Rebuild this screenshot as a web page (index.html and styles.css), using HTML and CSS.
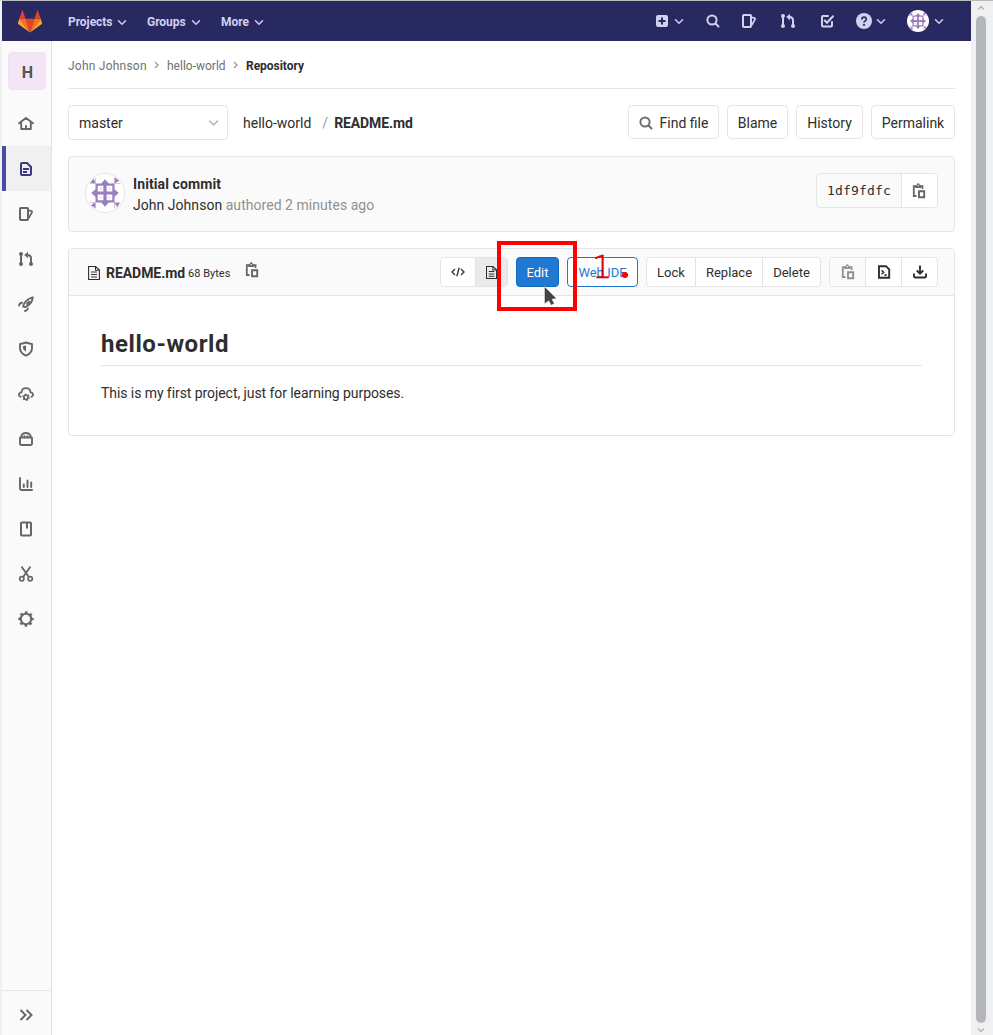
FILE: index.html
```html
<!DOCTYPE html>
<html lang="en">
<head>
<meta charset="utf-8">
<title>README.md · hello-world</title>
<link rel="stylesheet" href="styles.css">
</head>
<body>
<svg class="defs" aria-hidden="true">
  <symbol id="chevron" viewBox="0 0 10 10"><path d="M1.500 3.800 5 7.200l3.500-3.400" fill="none" stroke="currentColor" stroke-width="1.500" stroke-linecap="round"/></symbol>
  <symbol id="search" viewBox="0 0 16 16"><g fill="none" stroke="currentColor" stroke-width="2" stroke-linecap="round"><circle cx="7" cy="7" r="4.600"/><path d="m10.500 10.500 3 3"/></g></symbol>
  <symbol id="issues" viewBox="0 0 16 16"><path d="M2.800 2h6.400q.8 0 .8.800v10.400q0 .8-.8.800H2.800q-.8 0-.8-.8V2.800q0-.8.800-.8z" fill="none" stroke="currentColor" stroke-width="2"/><path d="M10.500 4.300l3 .8q.8.300.6 1.100L10.800 12" fill="none" stroke="currentColor" stroke-width="1.700" stroke-linejoin="round"/></symbol>
  <symbol id="merge" viewBox="0 0 16 16"><g fill="none" stroke="currentColor" stroke-width="2"><path d="M3 3v10M13 13V7.500Q13 4 9.500 4H8.500"/></g><g fill="currentColor"><circle cx="3" cy="3" r="2"/><circle cx="3" cy="13" r="2"/><circle cx="13" cy="13" r="2"/><path d="M10 .8v6.400L6.200 4z"/></g></symbol>
  <symbol id="clip" viewBox="0 0 16 16"><path d="M5.500 13H2.800V3.200h8.700V6" fill="none" stroke="currentColor" stroke-width="1.800"/><path d="M8 8.300h5.200v5.900H8z" fill="none" stroke="currentColor" stroke-width="1.900"/><path d="M4.300 5V2.300H5.600Q5.700.300 7.200.300t1.600 2h1.300V5z" fill="currentColor"/><path d="M6.500 2h1.300v1.200H6.500z" fill="#fafafa"/></symbol>
  <symbol id="doc" viewBox="0 0 14 16"><path d="M1.600 1.500h7l3.800 3.600v9.400H1.600zM8.500 1.500v3.800h4M4 7h6M4 9.500h6M4 12h6" fill="none" stroke="currentColor" stroke-width="1.100"/></symbol>
  <symbol id="identicon" viewBox="0 0 40 40"><circle cx="20" cy="20" r="20" fill="#fff"/><g fill="#9a7fc0"><path d="M20 5.500 24 10h6v6l4.500 4-4.500 4v6h-6l-4 4.500-4-4.500h-6v-6l-4.500-4 4.500-4v-6h6z"/><path d="M4.500 9.500 8 4.500l2 5zM30 3.500l5 3.500-5 3zM5 33l5-3.500V36zM30 30.500h5.500l-2.500 4.500z"/></g><g fill="#c4b3dc"><path d="M9.500 4h.8v7h-.8zM29.700 4h.8v7h-.8zM9.500 29h.8v7h-.8zM29.700 29h.8v7h-.8zM4 9.500h7v.8H4zM29 9.500h7v.8h-7zM4 29.700h7v.8H4zM29 29.700h7v.8h-7z"/></g><g fill="#fff"><path d="M12.300 12.300H18.300V18.300h-6zM21.700 12.300h6v6h-6zM12.300 21.700h6v6h-6zM21.700 21.700h6v6h-6z"/></g><g fill="#9a7fc0"><path d="M14.300 14.300h2.500v2.500h-2.500zM23.300 14.300h2.500v2.500h-2.500zM14.300 23.300h2.500v2.500h-2.500zM23.300 23.300h2.500v2.500h-2.500z" opacity=".2"/></g></symbol>
</svg>

<div class="window">
  <div class="viewport">
    <header class="navbar">
      <svg class="logo" viewBox="0 0 24 23"><path fill="#e24329" d="M12 22.500 16.500 8.800H7.500z"/><path fill="#fc6d26" d="M12 22.500 7.500 8.800H1.200zM12 22.500l4.500-13.700h6.300z"/><path fill="#fca326" d="M1.200 8.800 0 13q-.1.700.5 1.200L12 22.500zM22.800 8.800 24 13q.1.700-.5 1.200L12 22.500z"/><path fill="#e24329" d="M1.200 8.800h6.300L4.800.500q-.3-.5-.6 0zM22.800 8.800h-6.300L19.200.500q.3-.5.600 0z"/></svg>
      <nav class="menu">
        <a class="menu-item projects">Projects<svg><use href="#chevron"/></svg></a>
        <a class="menu-item groups">Groups<svg><use href="#chevron"/></svg></a>
        <a class="menu-item more">More<svg><use href="#chevron"/></svg></a>
      </nav>
      <div class="tools">
        <span class="pair"><svg viewBox="0 0 16 16"><path fill="currentColor" fill-rule="evenodd" d="M4 2h8q2 0 2 2v8q0 2-2 2H4q-2 0-2-2V4q0-2 2-2zm3 2.500V7H4.500v2H7v2.500h2V9h2.500V7H9V4.500z"/></svg><svg class="chev"><use href="#chevron"/></svg></span>
        <svg class="t-search"><use href="#search"/></svg>
        <svg class="t-issues"><use href="#issues"/></svg>
        <svg class="t-merge"><use href="#merge"/></svg>
        <svg class="t-todo" viewBox="0 0 16 16"><path d="M9 3H4q-1 0-1 1v8.500q0 1 1 1h8q1 0 1-1V9M5.800 7.500 8 9.700l6-6.500" fill="none" stroke="currentColor" stroke-width="2" stroke-linecap="round"/></svg>
        <span class="pair help"><svg viewBox="0 0 16 16"><circle cx="8" cy="8" r="8" fill="currentColor"/><path d="M5.900 6.400q0-2.200 2.200-2.200t2.200 1.900q0 1.200-1.200 1.800Q8 8.400 8 9.500" fill="none" stroke="#292961" stroke-width="1.700"/><circle cx="8" cy="11.800" r="1.100" fill="#292961"/></svg><svg class="chev"><use href="#chevron"/></svg></span>
        <span class="pair user"><svg class="user-avatar"><use href="#identicon"/></svg><svg class="chev"><use href="#chevron"/></svg></span>
      </div>
    </header>

    <div class="body">
      <aside class="sidebar">
        <div class="project-avatar">H</div>
        <a class="side-item home"><svg viewBox="0 0 16 16"><path d="M1 8.300 8 3l7 5.300M3.200 7v7h9.600V7M8 14v-3" fill="none" stroke="currentColor" stroke-width="1.900" stroke-linecap="round" stroke-linejoin="round"/></svg></a>
        <a class="side-item active"><svg viewBox="0 0 16 16"><path d="M4 2h5l4 4v7q0 1-1 1H4q-1 0-1-1V3q0-1 1-1z" fill="none" stroke="currentColor" stroke-width="2"/><path d="M5 8h6M5 11h4" stroke="currentColor" stroke-width="1.800"/></svg></a>
        <a class="side-item"><svg><use href="#issues"/></svg></a>
        <a class="side-item"><svg><use href="#merge"/></svg></a>
        <a class="side-item"><svg viewBox="0 0 16 16"><path d="M5.500 9Q8 3 14.800 1.300 14.200 7.500 7.300 11.200L5.200 10.500zM9 7.800l2-2.200M1 9.500q.6-2.600 3-2.800M7 15q2.400-.5 2.900-2.600" fill="none" stroke="currentColor" stroke-width="1.900" stroke-linecap="round" stroke-linejoin="round"/></svg></a>
        <a class="side-item"><svg viewBox="0 0 16 16"><path d="M8 1.500q3.500 1.400 6 1.400v4q0 5-6 7.700-6-2.700-6-7.700v-4q2.500 0 6-1.400z" fill="none" stroke="currentColor" stroke-width="1.900" stroke-linejoin="round"/><path d="M8 4.500v6.200Q5 9 5 7V5.200z" fill="currentColor"/></svg></a>
        <a class="side-item"><svg viewBox="0 0 16 16"><path d="M2.500 10.800Q.3 9.500 1.200 7.700 1.900 6.200 3.400 6.300 4 2.200 8 2.200t4.600 4.100q1.500-.1 2.200 1.400.9 1.800-1.300 3.100" fill="none" stroke="currentColor" stroke-width="1.800" stroke-linecap="round"/><circle cx="8" cy="11.300" r="2.100" fill="none" stroke="currentColor" stroke-width="1.700"/><circle cx="8" cy="11.300" r="3.200" fill="none" stroke="currentColor" stroke-width="1.200" stroke-dasharray="1.500 1.851"/></svg></a>
        <a class="side-item"><svg viewBox="0 0 16 16"><path d="M2.500 6.500h11q.5 0 .5.500v5.800q0 1.200-1.200 1.200H3.200Q2 14 2 12.800V7q0-.5.500-.5zM3 6Q4 2 8 2t5 4M6.500 6V4.500M9.500 6V4.500" fill="none" stroke="currentColor" stroke-width="1.900"/></svg></a>
        <a class="side-item"><svg viewBox="0 0 16 16"><path d="M2 2v10.500q0 1.500 1.500 1.500H14M5.800 8.500v2.500M9.500 4.500V11M13.200 6.500V11" fill="none" stroke="currentColor" stroke-width="1.900" stroke-linecap="round"/></svg></a>
        <a class="side-item"><svg viewBox="0 0 16 16"><path d="M3.800 1.500h8.400q.8 0 .8.800v11.400q0 .8-.8.800H3.800q-.8 0-.8-.8V2.300q0-.8.800-.8zM9 1.500v6" fill="none" stroke="currentColor" stroke-width="2"/></svg></a>
        <a class="side-item"><svg viewBox="0 0 16 16"><path d="M4 1.200 10.500 10.500M12 1.200 5.500 10.500" fill="none" stroke="currentColor" stroke-width="1.900" stroke-linecap="round"/><circle cx="3.800" cy="12.700" r="2.100" fill="none" stroke="currentColor" stroke-width="1.700"/><circle cx="12.200" cy="12.700" r="2.100" fill="none" stroke="currentColor" stroke-width="1.700"/></svg></a>
        <a class="side-item"><svg viewBox="0 0 16 16"><circle cx="8" cy="8" r="5.200" fill="none" stroke="currentColor" stroke-width="2"/><circle cx="8" cy="8" r="6.700" fill="none" stroke="currentColor" stroke-width="2" stroke-dasharray="2.600 2.662" stroke-dashoffset="1.300"/></svg></a>
        <a class="collapse"><svg viewBox="0 0 16 16"><path d="m2.500 3 5 5-5 5M8.500 3l5 5-5 5" fill="none" stroke="currentColor" stroke-width="2"/></svg></a>
      </aside>

      <main class="content">
        <nav class="crumbs"><span class="c-user">John Johnson</span><svg viewBox="0 0 8 8"><path d="m2 1 3 3-3 3" fill="none" stroke="currentColor" stroke-width="1.300"/></svg><span class="c-project">hello-world</span><svg viewBox="0 0 8 8"><path d="m2 1 3 3-3 3" fill="none" stroke="currentColor" stroke-width="1.300"/></svg><strong>Repository</strong></nav>

        <div class="tree">
          <div class="branch">master<svg><use href="#chevron"/></svg></div>
          <div class="path"><span>hello-world</span><i>/</i><strong>README.md</strong></div>
          <div class="actions">
            <a class="btn find"><svg><use href="#search"/></svg>Find file</a>
            <a class="btn blame">Blame</a>
            <a class="btn history">History</a>
            <a class="btn permalink">Permalink</a>
          </div>
        </div>

        <section class="commit">
          <svg class="avatar"><use href="#identicon"/></svg>
          <div class="commit-text"><strong>Initial commit</strong><p><span>John Johnson</span> authored 2 minutes ago</p></div>
          <div class="hash"><code>1df9fdfc</code><a><svg><use href="#clip"/></svg></a></div>
        </section>

        <section class="file">
          <div class="file-head">
            <svg class="file-icon"><use href="#doc"/></svg>
            <strong class="file-name">README.md</strong>
            <small>68 Bytes</small>
            <svg class="copy-path"><use href="#clip"/></svg>
            <div class="file-actions">
              <div class="group viewer"><a><svg viewBox="0 0 16 16"><path d="M5 5 2 8l3 3M11 5l3 3-3 3M9.200 3.800l-2.400 8.400" fill="none" stroke="currentColor" stroke-width="1.300"/></svg></a><a class="on"><svg class="doc"><use href="#doc"/></svg></a></div>
              <div class="edit-wrap"><a class="edit">Edit</a>
                <span class="highlight"></span>
                <svg class="cursor" viewBox="0 0 14 20"><path d="M.5.500 12.500 12.500 8 13.300l2.300 4.200-3.200 1.700-2.300-4.400L.5 17.800z" fill="#444" stroke="#eee" stroke-width=".5"/></svg>
              </div>
              <div class="ide-wrap"><a class="ide">Web IDE</a><span class="step">1</span><span class="step-dot"></span></div>
              <div class="group manage"><a>Lock</a><a>Replace</a><a>Delete</a></div>
              <div class="group raw"><a class="disabled"><svg><use href="#clip"/></svg></a><a><svg viewBox="0 0 16 16"><path d="M3 2.200h7l3.200 3.200v8.400H3z" fill="none" stroke="currentColor" stroke-width="1.900"/><path d="m5.500 6.200 2.300 2-2.300 2M8.300 11h2.500" fill="none" stroke="currentColor" stroke-width="1.400"/></svg></a><a><svg viewBox="0 0 16 16"><path d="M8 1.500V9M4.800 6.500 8 9.700l3.200-3.200M2 9.500v2.700q0 1.300 1.300 1.300h9.400q1.300 0 1.300-1.300V9.500" fill="none" stroke="currentColor" stroke-width="1.900"/></svg></a></div>
            </div>
          </div>
          <article class="readme"><h1>hello-world</h1><p>This is my first project, just for learning purposes.</p></article>
        </section>
      </main>
    </div>
  </div>
  <div class="scrollbar"><svg viewBox="0 0 8 6"><path d="M1 4.500 4 1.500l3 3" fill="none" stroke="currentColor" stroke-width="1.500"/></svg><div class="thumb"></div><svg viewBox="0 0 8 6"><path d="m1 1.500 3 3 3-3" fill="none" stroke="currentColor" stroke-width="1.500"/></svg></div>
</div>
</body>
</html>
```
FILE: styles.css
```css
* { box-sizing: border-box; }
body { margin: 0; background: #fff; color: #2e2e2e; font: 14px/20px Roboto, "Noto Sans", sans-serif; white-space: nowrap; }
p, h1 { margin: 0; }
svg { display: block; flex: none; width: 16px; height: 16px; }
.defs { position: absolute; width: 0; height: 0; }
strong { font-weight: 700; }

.window { display: flex; height: 1035px; border-top: 1px solid #b9babb; border-left: 2px solid #f0f0f0; overflow: hidden; }
.viewport { width: 969px; display: flex; flex-direction: column; }

.navbar { height: 40px; flex: none; display: flex; align-items: center; padding: 0 27px 0 16px; background: #292961; color: #d1d1f0; }
.logo { width: 24px; height: 23px; margin-right: 26px; }
.menu { display: flex; padding-top: 1px; }
.menu-item { display: flex; align-items: center; justify-content: space-between; font-size: 12px; font-weight: 700; letter-spacing: -.05px; }
.menu-item svg, .chev { width: 10px; height: 10px; }
.projects { width: 59px; margin-right: 20px; }
.groups { width: 54px; margin-right: 20px; }
.more { width: 43px; }
.tools { display: flex; align-items: center; margin-left: auto; }
.pair { display: flex; align-items: center; gap: 4px; }
.t-search { margin-left: 21px; }
.t-issues { margin-left: 20px; }
.t-merge, .t-todo { margin-left: 23px; }
.help { margin-left: 21px; }
.user { margin-left: 21px; gap: 5px; }
.user-avatar { width: 22px; height: 22px; }

.body { flex: 1; display: flex; }
.sidebar { width: 50px; display: flex; flex-direction: column; background: #fafafa; border-right: 1px solid #e5e5e5; color: #666; }
.project-avatar { width: 38px; height: 38px; margin: 11px 0 11px 6px; padding-left: 1px; border: 1px solid #eee2f2; border-radius: 4px; background: #f3e5f5; color: #555; font-size: 16px; font-weight: 700; line-height: 39px; text-align: center; }
.side-item { height: 45px; display: flex; align-items: center; padding-left: 16px; }
.side-item.home { padding-bottom: 1px; }
.side-item.active { padding-left: 12px; border-left: 4px solid #4b4ba3; background: #f0f0f0; color: #393982; }
.collapse { height: 45px; margin-top: auto; padding: 16px 0 0 16px; border-top: 1px solid #e5e5e5; }

.content { flex: 1; padding: 0 16px; }
.crumbs { height: 48px; display: flex; align-items: center; padding-top: 2px; border-bottom: 1px solid #e5e5e5; color: #707070; font-size: 12px; }
.crumbs svg { width: 8px; height: 8px; margin: 0 6px 2px; color: #999; }
.crumbs strong { color: #2e2e2e; letter-spacing: -.03px; }
.c-user { width: 79px; letter-spacing: .23px; }
.c-project { width: 59px; }

.tree { display: flex; align-items: center; height: 35px; margin-top: 16px; }
.branch { width: 160px; height: 35px; display: flex; align-items: center; justify-content: space-between; padding: 0 8px 0 10px; border: 1px solid #e5e5e5; border-radius: 4px; }
.branch svg { width: 11px; height: 11px; color: #bababa; }
.path { display: flex; margin-left: 15px; }
.path i { margin: 0 6px 0 11px; color: #999; font-style: normal; }
.path strong, .file-name { letter-spacing: -.1px; }
.actions { display: flex; gap: 8px; margin-left: auto; }
.btn { height: 34px; display: flex; align-items: center; justify-content: center; margin-bottom: 1px; padding-top: 2px; border: 1px solid #e5e5e5; border-radius: 4px; background: #fff; }
.find { width: 91px; gap: 6px; padding-right: 1px; }
.find svg { color: #707070; }
.blame { width: 61px; }
.history { width: 67px; }
.permalink { width: 84px; }

.commit { height: 76px; display: flex; margin-top: 16px; padding: 16px; border: 1px solid #e5e5e5; border-radius: 4px; background: #fafafa; }
.avatar { width: 40px; height: 40px; border: 1px solid #e5e5e5; border-radius: 50%; }
.commit-text { margin: 1px 0 0 8px; line-height: 21px; color: #919191; letter-spacing: .04px; }
.commit-text strong { letter-spacing: .1px; }
.commit-text strong, .commit-text span { color: #2e2e2e; }
.hash { display: flex; width: 122px; height: 35px; margin-left: auto; border: 1px solid #e5e5e5; border-radius: 4px; overflow: hidden; }
.hash code { width: 84px; font: 13px/34px "DejaVu Sans Mono", monospace; letter-spacing: .17px; text-align: center; }
.hash a { flex: 1; display: grid; place-items: center; padding-right: 1px; border-left: 1px solid #e5e5e5; background: #fff; color: #666; }

.file { height: 188px; margin-top: 16px; border: 1px solid #e5e5e5; border-radius: 4px; }
.file-head { height: 47px; display: flex; align-items: center; padding: 0 16px 0 18px; border-bottom: 1px solid #e5e5e5; border-radius: 3px 3px 0 0; background: #fafafa; }
.file-icon { width: 14px; height: 16px; margin-top: 1px; }
.file-name { margin: 2px 3px 0 5px; letter-spacing: -.05px; }
small { margin-top: 4px; font-size: 11px; }
.copy-path { margin: 0 0 4px 14px; color: #666; }
.file-actions { display: flex; gap: 8px; margin-left: auto; font-size: 13px; line-height: 30px; }
.group { display: flex; height: 30px; border: 1px solid #e5e5e5; border-radius: 4px; background: #fff; overflow: hidden; }
.group a { flex: 1; height: 28px; display: grid; place-items: center; }
.group a + a { border-left: 1px solid #e5e5e5; }
.viewer { width: 68px; }
.viewer a:first-child { flex: 0 0 34px; }
.viewer .on { background: #eaeaea; }
.viewer .doc { width: 13px; height: 15px; }
.manage { width: 175px; }
.manage a:nth-child(1) { flex: 0 0 48px; }
.manage a:nth-child(2) { flex: 0 0 67px; }
.raw { width: 109px; }
.raw .disabled { flex: 0 0 35px; background: #fafafa; color: #919191; }
.edit-wrap, .ide-wrap { position: relative; height: 30px; }
.edit, .ide { display: block; height: 30px; border: 1px solid #1068bf; border-radius: 4px; text-align: center; }
.edit { width: 43px; background: #1f78d1; color: #fff; }
.ide { width: 71px; border-color: #1f78d1; background: #fff; color: #1f78d1; }
.highlight { position: absolute; z-index: 2; left: -19px; top: -16px; width: 80px; height: 70px; border: 4px solid #f00; }
.cursor { position: absolute; z-index: 3; left: 28px; top: 29px; width: 14px; height: 20px; }
.step { position: absolute; left: 25px; top: -7px; color: #e00000; font: 200 32px/35px "DejaVu Sans Light", "DejaVu Sans", sans-serif; -webkit-text-stroke: .5px #e00000; }
.step-dot { position: absolute; left: 55px; top: 15px; width: 6px; height: 6px; border-radius: 50%; background: #f00; }

.readme { padding: 30px 32px 0; }
.readme h1 { height: 40px; border-bottom: 1px solid #e5e5e5; font-size: 24px; line-height: 36px; font-weight: 700; letter-spacing: .55px; }
.readme p { margin-top: 17px; letter-spacing: -.07px; }

.scrollbar { width: 22px; display: flex; flex-direction: column; align-items: center; justify-content: space-between; padding: 4px 2px 2px 0; background: #eff0f1; color: #b5b6b8; }
.scrollbar svg { width: 8px; height: 6px; }
.thumb { width: 10px; height: 1007px; border-radius: 5px; background: #b5b6b8; }
```
